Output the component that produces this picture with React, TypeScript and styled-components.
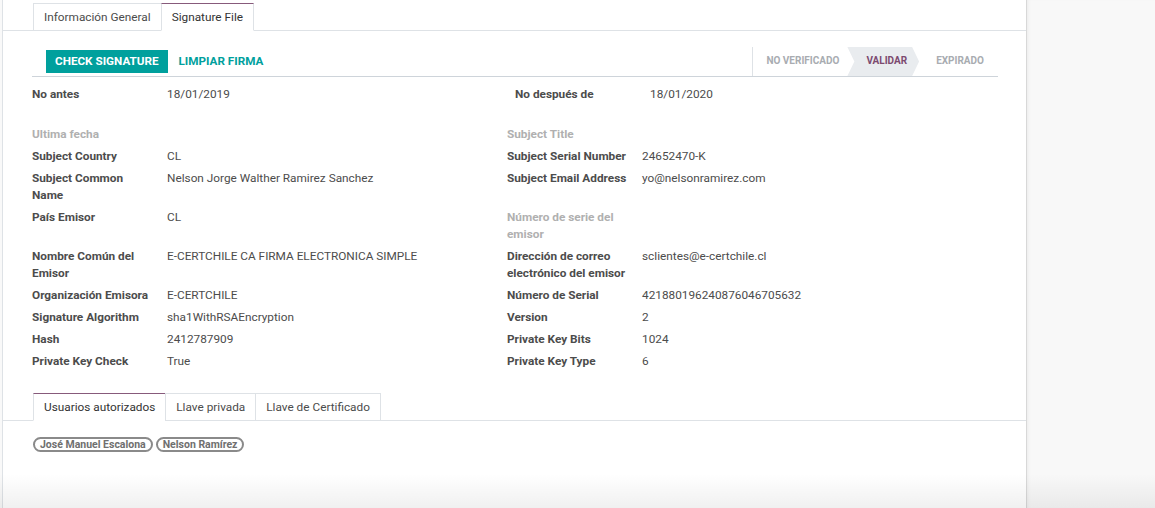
import styled, { createGlobalStyle } from 'styled-components';

const GlobalStyle = createGlobalStyle`
  html, body {
    margin: 0;
    padding: 0;
    background: #f9f9f9;
  }
  body {
    font-family: Roboto, "Noto Sans", "Liberation Sans", sans-serif;
    font-size: 11.8px;
    color: #4c4c4c;
  }
`;

const headerFields = [
  { label: 'No antes', value: '18/01/2019', label2: 'No después de', value2: '18/01/2020' },
];

type Field = { label: string; value?: string };

const leftFields: Field[] = [
  { label: 'Ultima fecha' },
  { label: 'Subject Country', value: 'CL' },
  { label: 'Subject Common Name', value: 'Nelson Jorge Walther Ramirez Sanchez' },
  { label: 'País Emisor', value: 'CL' },
  { label: 'Nombre Común del Emisor', value: 'E-CERTCHILE CA FIRMA ELECTRONICA SIMPLE' },
  { label: 'Organización Emisora', value: 'E-CERTCHILE' },
  { label: 'Signature Algorithm', value: 'sha1WithRSAEncryption' },
  { label: 'Hash', value: '2412787909' },
  { label: 'Private Key Check', value: 'True' },
];

const rightFields: Field[] = [
  { label: 'Subject Title' },
  { label: 'Subject Serial Number', value: '24652470-K' },
  { label: 'Subject Email Address', value: 'yo@nelsonramirez.com' },
  { label: 'Número de serie del emisor' },
  { label: 'Dirección de correo electrónico del emisor', value: 'sclientes@e-certchile.cl' },
  { label: 'Número de Serial', value: '421880196240876046705632' },
  { label: 'Version', value: '2' },
  { label: 'Private Key Bits', value: '1024' },
  { label: 'Private Key Type', value: '6' },
];

const stages = ['NO VERIFICADO', 'VALIDAR', 'EXPIRADO'];
const activeStage = 'VALIDAR';

const users = ['José Manuel Escalona', 'Nelson Ramírez'];

export default function App() {
  return (
    <Page>
      <GlobalStyle />
      <Sheet>
        <TabBar>
          <Tab>Información General</Tab>
          <Tab $active>Signature File</Tab>
        </TabBar>

        <Content>
          <Header>
            <Buttons>
              <PrimaryButton>CHECK SIGNATURE</PrimaryButton>
              <LinkButton>LIMPIAR FIRMA</LinkButton>
            </Buttons>
            <StatusBar>
              {stages.map((s) => (
                <Stage key={s} $active={s === activeStage}>
                  {s}
                </Stage>
              ))}
            </StatusBar>
          </Header>

          <TopGroup>
            {headerFields.map((f) => (
              <>
                <Label key={f.label}>{f.label}</Label>
                <Value>{f.value}</Value>
                <Label>{f.label2}</Label>
                <Value>{f.value2}</Value>
              </>
            ))}
          </TopGroup>

          <FieldGroup>
            {leftFields.map((f, i) => {
              const r = rightFields[i];
              return (
                <>
                  <Label key={f.label} $empty={!f.value}>{f.label}</Label>
                  <Value>{f.value}</Value>
                  <Label $empty={!r.value}>{r.label}</Label>
                  <Value>{r.value}</Value>
                </>
              );
            })}
          </FieldGroup>
        </Content>

        <SubTabBar>
          <Tab $active>Usuarios autorizados</Tab>
          <Tab>Llave privada</Tab>
          <Tab>Llave de Certificado</Tab>
        </SubTabBar>

        <Tags>
          {users.map((u) => (
            <Tag key={u}>{u}</Tag>
          ))}
        </Tags>
      </Sheet>
      <Side />
    </Page>
  );
}

/* Styled Components */

const Page = styled.div`
  position: relative;
  display: flex;
  height: 508px;
  overflow: hidden;
  padding-left: 2px;
  background: #f9f9f9;
  box-sizing: border-box;

  &::after {
    content: '';
    position: absolute;
    left: 0;
    right: 0;
    bottom: 0;
    height: 34px;
    pointer-events: none;
    background: linear-gradient(to bottom, rgba(0, 0, 0, 0), rgba(0, 0, 0, 0.06));
  }
`;

const Sheet = styled.div`
  width: 1025px;
  flex: none;
  background: #fff;
  border-left: 1px solid #dee2e6;
  border-right: 1px solid #d8d8d8;
  box-sizing: border-box;
  padding-top: 3px;
`;

const Side = styled.div`
  flex: 1;
  background: #f8f8f8;
  box-shadow: inset 3px 0 4px -3px rgba(0, 0, 0, 0.08);
`;

const TabBar = styled.div`
  display: flex;
  padding-left: 30px;
  border-bottom: 1px solid #dee2e6;
`;

const SubTabBar = styled(TabBar)`
  margin-top: 18px;
`;

const Tab = styled.div<{ $active?: boolean }>`
  height: 28px;
  box-sizing: border-box;
  padding: 0 10px;
  display: flex;
  align-items: center;
  color: ${(p) => (p.$active ? '#333' : '#4c4c4c')};
  border: 1px solid #dee2e6;
  border-top: 1px solid ${(p) => (p.$active ? '#875a7b' : '#dee2e6')};
  background: #fff;
  margin-bottom: -1px;
  margin-right: -1px;
  border-bottom-color: ${(p) => (p.$active ? '#fff' : '#dee2e6')};
`;

const Content = styled.div`
  padding: 0 28px 0 29px;
`;

const Header = styled.div`
  margin-top: 16px;
  height: 29px;
  display: flex;
  align-items: center;
  justify-content: space-between;
  border-bottom: 1px solid #ced4da;
  padding-left: 14px;
`;

const Buttons = styled.div`
  display: flex;
  align-items: center;
  gap: 2px;
  margin-top: -1px;
`;

const PrimaryButton = styled.button`
  height: 23px;
  padding: 0 9px;
  border: none;
  background: #00a09d;
  color: #fff;
  font-family: Roboto, sans-serif;
  font-size: 11.7px;
  font-weight: 700;
  cursor: pointer;
`;

const LinkButton = styled(PrimaryButton)`
  background: transparent;
  color: #00a09d;
`;

const StatusBar = styled.div`
  display: flex;
  align-self: stretch;
  border-left: 1px solid #dee2e6;
`;

const Stage = styled.div<{ $active?: boolean }>`
  display: flex;
  align-items: center;
  padding: 0 12px 2px 19px;
  font-size: 10px;
  font-weight: 700;
  color: ${(p) => (p.$active ? '#7c4a6f' : '#a8acb1')};
  background: ${(p) => (p.$active ? '#e9ecef' : 'transparent')};
  clip-path: ${(p) =>
    p.$active
      ? 'polygon(0 0, calc(100% - 7px) 0, 100% 50%, calc(100% - 7px) 100%, 0 100%, 7px 50%)'
      : 'none'};

  &:first-child {
    padding: 0 8px 2px 13px;
  }
  &:last-child {
    padding: 0 14px 2px 17px;
  }
`;

const Grid = styled.div`
  display: grid;
  line-height: 17px;
  align-items: start;
`;

const TopGroup = styled(Grid)`
  margin-top: 9px;
  grid-template-columns: 135px 348px 135px 1fr;
`;

const FieldGroup = styled(Grid)`
  margin-top: 18px;
  grid-template-columns: 135px 340px 135px 1fr;
`;

const Label = styled.div<{ $empty?: boolean }>`
  font-weight: 700;
  color: ${(p) => (p.$empty ? '#b0b0b0' : '#4c4c4c')};
  padding: 0 10px 5px 0;
`;

const Value = styled.div`
  color: #4c4c4c;
  padding: 0 10px 5px 0;
`;

const Tags = styled.div`
  display: flex;
  gap: 3px;
  padding: 16px 0 0 30px;
`;

const Tag = styled.span`
  display: inline-flex;
  align-items: center;
  height: 15px;
  box-sizing: border-box;
  padding: 0 5px;
  border: 2px solid #8a8a8a;
  border-radius: 9px;
  font-size: 10.5px;
  font-weight: 700;
  color: #6f6f6f;
`;
